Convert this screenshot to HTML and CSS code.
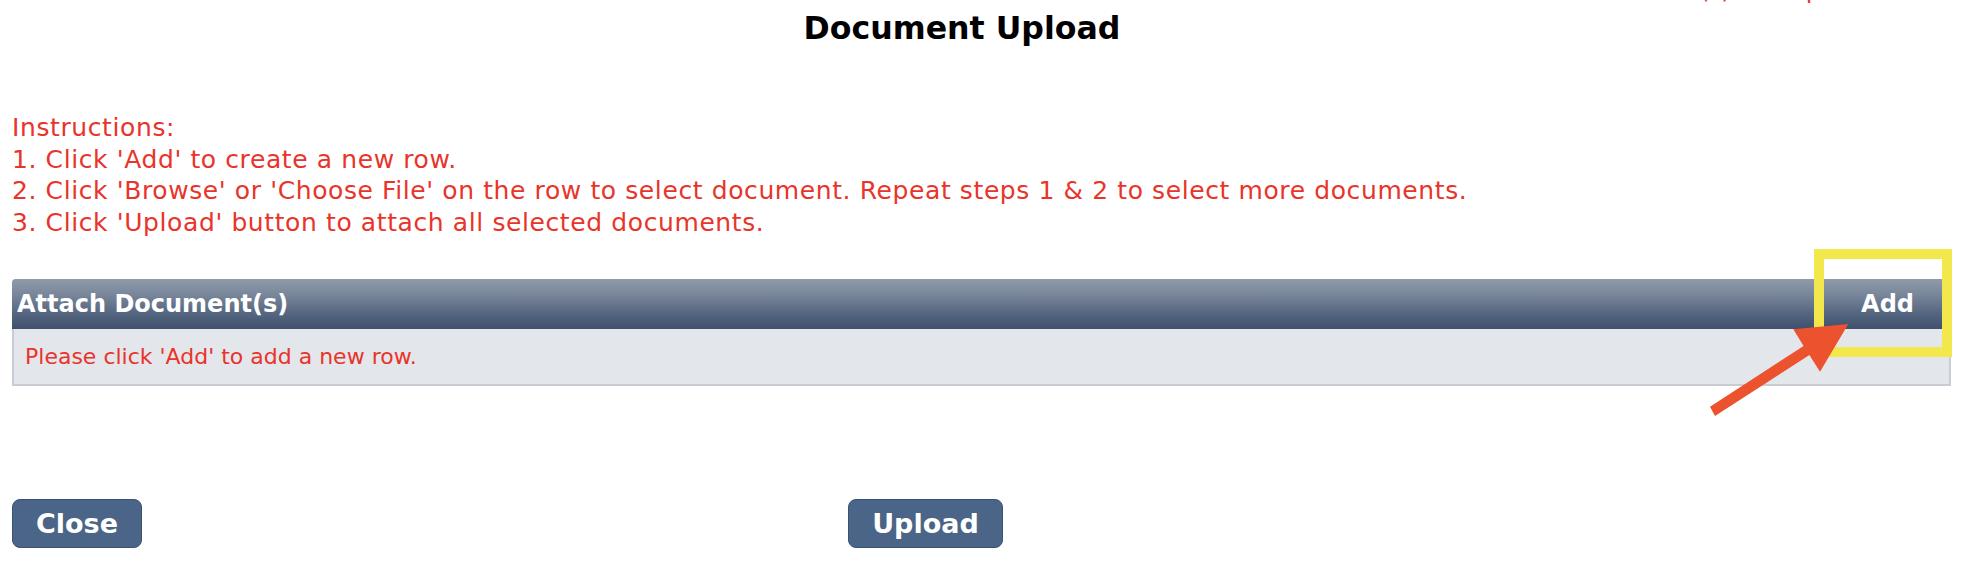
FILE: index.html
```html
<!DOCTYPE html>
<html lang="en">
<head>
<meta charset="utf-8">
<title>Document Upload</title>
<link rel="stylesheet" href="styles.css">
</head>
<body>
<div class="page">
  <div class="topnote"><span>(*) Example</span></div>
  <h1 class="title">Document Upload</h1>
  <div class="instructions">
    <div>Instructions:</div>
    <div>1. Click 'Add' to create a new row.</div>
    <div>2. Click 'Browse' or 'Choose File' on the row to select document. Repeat steps 1 &amp; 2 to select more documents.</div>
    <div>3. Click 'Upload' button to attach all selected documents.</div>
  </div>
  <div class="attach">
    <div class="attach-head">
      <span class="attach-title">Attach Document(s)</span>
      <span class="attach-add">Add</span>
    </div>
    <div class="attach-body">Please click 'Add' to add a new row.</div>
  </div>
  <div class="actions">
    <button class="btn btn-close">Close</button>
    <button class="btn btn-upload">Upload</button>
  </div>
  <div class="highlight"></div>
  <svg class="pointer" width="1962" height="574" viewBox="0 0 1962 574">
    <polygon points="1710,406.7 1803.6,346 1793.3,329.3 1848.3,324 1820,371.7 1809.4,355 1715,416" fill="#ec522d"/>
  </svg>
</div>
</body>
</html>
```
FILE: styles.css
```css
html, body {
  margin: 0;
  padding: 0;
  background: #ffffff;
}
body {
  font-family: "DejaVu Sans", Verdana, sans-serif;
  width: 1962px;
  height: 574px;
  overflow: hidden;
}
.page {
  position: relative;
  width: 1962px;
  height: 574px;
  padding: 0 11px 0 12px;
  box-sizing: border-box;
}
.topnote {
  height: 0;
  display: flex;
  justify-content: flex-start;
  padding-left: 1688px;
  color: #e8342a;
  font-size: 24px;
  line-height: 28px;
}
.topnote span {
  display: block;
  transform: translateY(-24px);
}
.title {
  margin: 10px 0 0;
  padding-right: 39px;
  text-align: center;
  font-size: 31.6px;
  font-weight: bold;
  line-height: 36px;
  color: #000;
}
.instructions {
  margin-top: 66px;
  color: #e8342a;
  font-size: 25px;
  letter-spacing: 0.6px;
  line-height: 31.5px;
}
.attach {
  margin-top: 41px;
  border: 2px solid #c9ccd3;
  border-top: none;
  border-radius: 4px 4px 0 0;
  background: #e3e6eb;
}
.attach-head {
  margin: 0 -2px;
  height: 50px;
  display: flex;
  justify-content: space-between;
  align-items: center;
  padding: 0 37px 0 5px;
  border-radius: 4px 4px 0 0;
  background: linear-gradient(#8f9bab, #7a879b 30%, #54657f 70%, #3e506c);
  color: #fff;
  font-size: 24px;
  font-weight: bold;
  line-height: 50px;
}
.attach-body {
  height: 55px;
  padding-left: 11px;
  color: #e8342a;
  font-size: 22px;
  line-height: 55px;
}
.actions {
  margin-top: 113px;
  display: flex;
  gap: 706px;
}
.btn {
  font-family: "DejaVu Sans", Verdana, sans-serif;
  font-weight: bold;
  font-size: 27px;
  color: #fff;
  background: #4a6587;
  border: 1px solid #3a5274;
  border-radius: 8px;
  height: 49px;
  padding: 0;
}
.btn-close { width: 130px; }
.btn-upload { width: 155px; }
.highlight {
  position: absolute;
  left: 1814px;
  top: 249px;
  width: 138px;
  height: 108px;
  box-sizing: border-box;
  border: 10px solid #f3e84b;
}
.pointer {
  position: absolute;
  left: 0;
  top: 0;
  pointer-events: none;
}
```
